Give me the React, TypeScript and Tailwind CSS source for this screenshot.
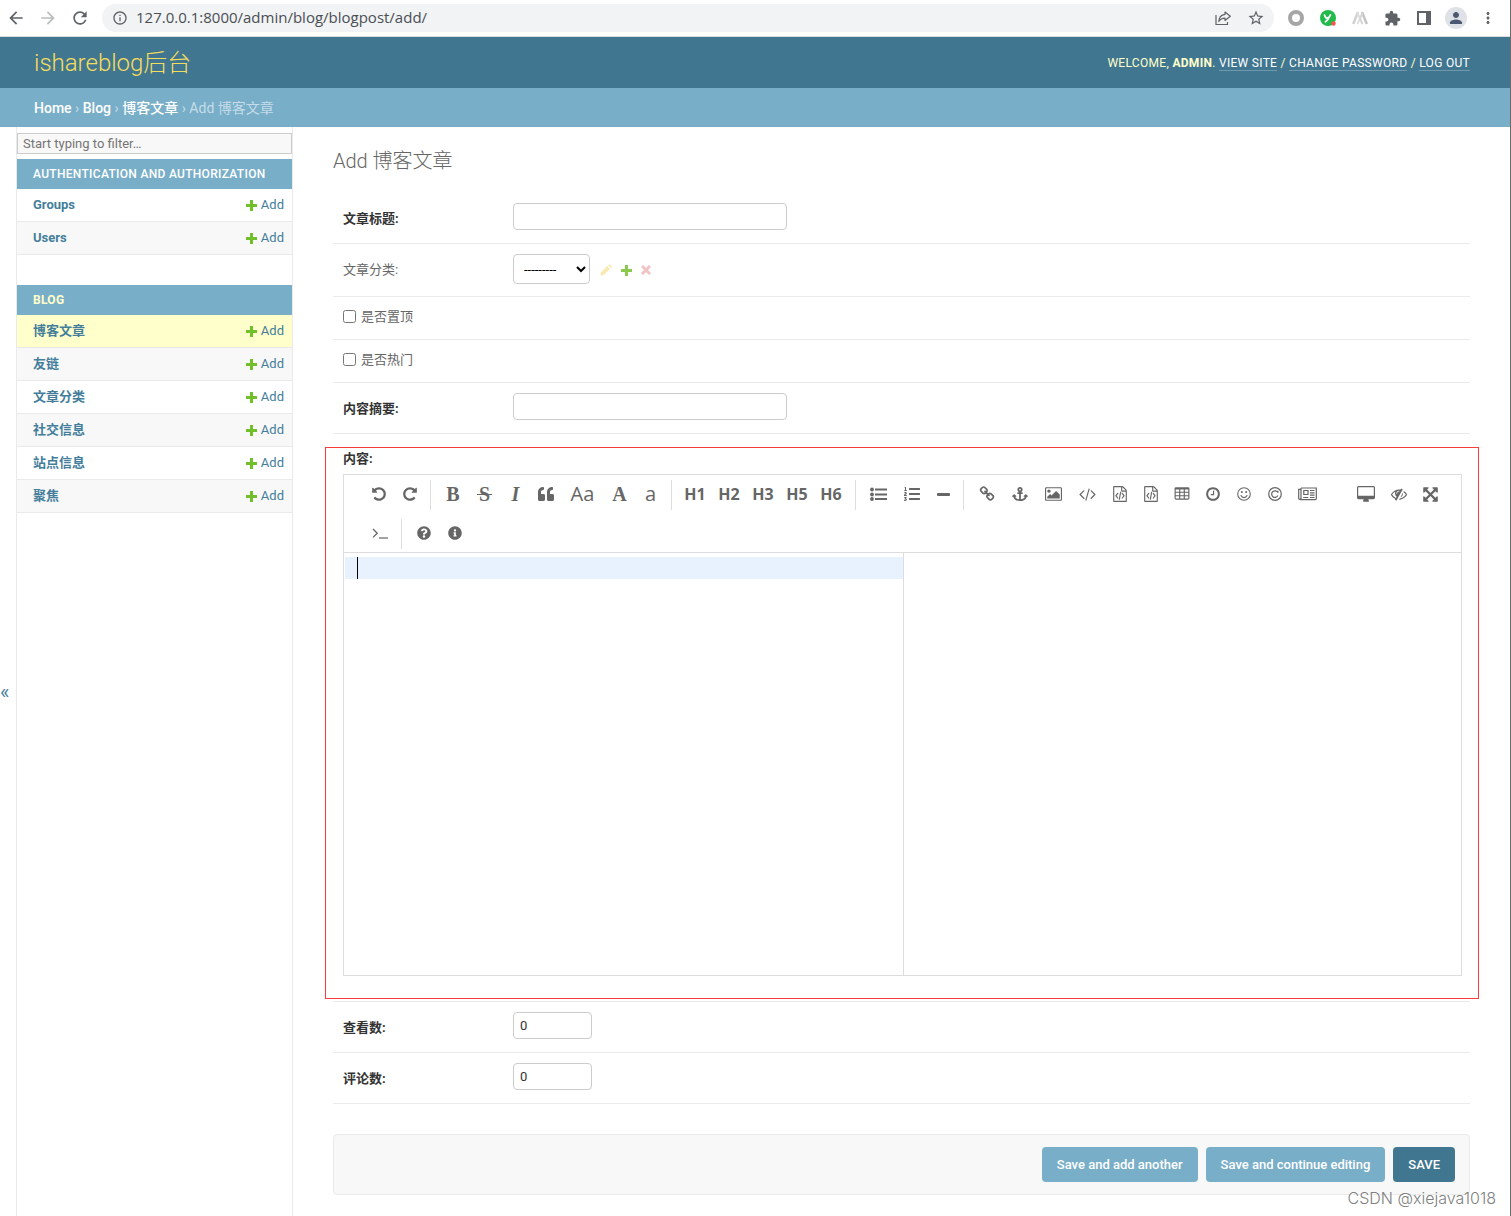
import type { ReactNode } from "react";
import {
  MdArrowBack,
  MdArrowForward,
  MdExtension,
  MdInfoOutline,
  MdMoreVert,
  MdPerson,
  MdRefresh,
  MdStarBorder,
} from "react-icons/md";
import { FaAnchor, FaInfoCircle, FaListOl, FaQuestionCircle, FaQuoteLeft } from "react-icons/fa";

/* ---------- icons ---------- */

function Glyph({ d, w = 1792, className = "h-4 w-4" }: { d: string; w?: number; className?: string }) {
  return (
    <svg viewBox={`0 0 ${w} 1792`} className={className} fill="currentColor" fillRule="evenodd" aria-hidden="true">
      <path d={d} />
    </svg>
  );
}

const UNDO =
  "M1664 896q0 156-61 298t-164 245-245 164-298 61q-172 0-327-72.5t-264-204.5q-7-10-6.5-22.5t8.5-20.5l137-138q10-9 25-9 16 2 23 12 73 95 179 147t225 52q104 0 198.5-40.5t163.5-109.5 109.5-163.5 40.5-198.5-40.5-198.5-109.5-163.5-163.5-109.5-198.5-40.5q-98 0-188 35.5t-160 101.5l137 138q31 30 14 69-17 40-59 40h-448q-26 0-45-19t-19-45v-448q0-42 40-59 39-17 69 14l130 129q107-101 244.5-156.5t284.5-55.5q156 0 298 61t245 164 164 245 61 298z";
const REDO =
  "M1664 256v448q0 26-19 45t-45 19h-448q-42 0-59-40-17-39 14-69l138-138q-148-137-349-137-104 0-198.5 40.5t-163.5 109.5-109.5 163.5-40.5 198.5 40.5 198.5 109.5 163.5 163.5 109.5 198.5 40.5q119 0 225-52t179-147q7-10 23-12 15 0 25 9l137 138q9 8 9.5 20.5t-7.5 22.5q-109 132-264 204.5t-327 72.5q-156 0-298-61t-245-164-164-245-61-298 61-298 164-245 245-164 298-61q147 0 284.5 55.5t244.5 156.5l130-129q29-31 70-14 39 17 39 59z";
const LINK =
  "M1520 1216q0-40-28-68l-208-208q-28-28-68-28-42 0-72 32 3 3 19 18.5t21.5 21.5 15 19 13 25.5 3.5 27.5q0 40-28 68t-68 28q-15 0-27.5-3.5t-25.5-13-19-15-21.5-21.5-18.5-19q-33 31-33 73 0 40 28 68l206 207q27 27 68 27 40 0 68-26l147-146q28-28 28-67zm-703-705q0-40-28-68l-206-207q-28-28-68-28-39 0-68 27l-147 146q-28 28-28 67 0 40 28 68l208 208q27 27 68 27 42 0 72-31-3-3-19-18.5t-21.5-21.5-15-19-13-25.5-3.5-27.5q0-40 28-68t68-28q15 0 27.5 3.5t25.5 13 19 15 21.5 21.5 18.5 19q33-31 33-73zm895 705q0 120-85 203l-147 146q-83 83-203 83-121 0-204-85l-206-207q-83-83-83-203 0-123 88-209l-88-88q-86 88-208 88-120 0-204-84l-208-208q-84-84-84-204t85-203l147-146q83-83 203-83 121 0 204 85l206 207q83 83 83 203 0 123-88 209l88 88q86-88 208-88 120 0 204 84l208 208q84 84 84 204z";
const PICTURE =
  "M640 576q0 80-56 136t-136 56-136-56-56-136 56-136 136-56 136 56 56 136zm1024 384v448h-1408v-192l320-320 160 160 512-512zm96-704h-1600q-13 0-22.500 9.500t-9.500 22.500v1216q0 13 9.500 22.500t22.500 9.500h1600q13 0 22.500-9.500t9.500-22.500v-1216q0-13-9.500-22.500t-22.500-9.500zm160 32v1216q0 66-47 113t-113 47h-1600q-66 0-113-47t-47-113v-1216q0-66 47-113t113-47h1600q66 0 113 47t47 113z";
const CODE =
  "M617 1399l-50 50q-10 10-23 10t-23-10l-466-466q-10-10-10-23t10-23l466-466q10-10 23-10t23 10l50 50q10 10 10 23t-10 23l-393 393 393 393q10 10 10 23t-10 23zm591-1067l-373 1291q-4 13-15.500 19.500t-23.500 2.500l-62-17q-13-4-19.500-15.500t-2.500-24.500l373-1291q4-13 15.500-19.500t23.500-2.500l62 17q13 4 19.500 15.500t2.500 24.500zm657 651l-466 466q-10 10-23 10t-23-10l-50-50q-10-10-10-23t10-23l393-393-393-393q-10-10-10-23t10-23l50-50q10-10 23-10t23 10l466 466q10 10 10 23t-10 23z";
const FILE_CODE =
  "M1596 380q28 28 48 76t20 88v1152q0 40-28 68t-68 28h-1344q-40 0-68-28t-28-68v-1600q0-40 28-68t68-28h896q40 0 88 20t76 48zm-444-244v376h376q-10-29-22-41l-313-313q-12-12-41-22zm384 1528v-1024h-416q-40 0-68-28t-28-68v-416h-768v1536h1280zm-928-896q8-11 21-12.500t24 6.500l51 38q11 8 12.500 21t-6.500 24l-182 243 182 243q8 11 6.500 24t-12.500 21l-51 38q-11 8-24 6.500t-21-12.500l-226-301q-14-19 0-38zm802 301q14 19 0 38l-226 301q-8 11-21 12.500t-24-6.500l-51-38q-11-8-12.500-21t6.500-24l182-243-182-243q-8-11-6.500-24t12.500-21l51-38q11-8 24-6.500t21 12.500zm-620 461q-13-2-20.500-13t-5.500-24l138-831q2-13 13-20.500t24-5.500l63 10q13 2 20.500 13t5.500 24l-138 831q-2 13-13 20.500t-24 5.500z";
const TABLE =
  "M224 128h1344q66 0 113 47t47 113v1088q0 66-47 113t-113 47h-1344q-66 0-113-47t-47-113v-1088q0-66 47-113t113-47zM192 384v256h384v-256zM704 384v256h384v-256zM1216 384v256h384v-256zM192 768v256h384v-256zM704 768v256h384v-256zM1216 768v256h384v-256zM192 1152v256h384v-256zM704 1152v256h384v-256zM1216 1152v256h384v-256z";
const CLOCK =
  "M1024 544v448q0 14-9 23t-23 9h-320q-14 0-23-9t-9-23v-64q0-14 9-23t23-9h224v-352q0-14 9-23t23-9h64q14 0 23 9t9 23zm416 352q0-148-73-273t-198-198-273-73-273 73-198 198-73 273 73 273 198 198 273 73 273-73 198-198 73-273zm224 0q0 209-103 385.500t-279.500 279.500-385.500 103-385.500-103-279.500-279.500-103-385.500 103-385.500 279.500-279.500 385.500-103 385.500 103 279.500 279.500 103 385.500z";
const DESKTOP =
  "M1792 992v-832q0-13-9.500-22.500t-22.500-9.500h-1600q-13 0-22.500 9.500t-9.500 22.500v832q0 13 9.500 22.500t22.500 9.500h1600q13 0 22.500-9.500t9.500-22.500zm128-832v1088q0 66-47 113t-113 47h-544q0 37 16 77.500t32 71 16 43.500q0 26-19 45t-45 19h-512q-26 0-45-19t-19-45q0-14 16-44t32-70 16-78h-544q-66 0-113-47t-47-113v-1088q0-66 47-113t113-47h1600q66 0 113 47t47 113z";
const EYE_SLASH =
  "M555 1335l78-141q-87-63-136-159t-49-203q0-121 61-225-229 117-381 353 167 258 427 375zm389-759q0-20-14-34t-34-14q-125 0-214.500 89.500t-89.500 214.500q0 20 14 34t34 14 34-14 14-34q0-86 61-147t147-61q20 0 34-14t14-34zm363-191q0 7-1 9-106 189-316 567t-315 566l-49 89q-10 16-28 16-12 0-134-70-16-10-16-28 0-12 44-87-143-65-263.500-173t-208.500-245q-20-31-20-69t20-69q153-235 380-371t496-136q89 0 180 17l54-97q10-16 28-16 5 0 18 6t31 15.500 33 18.500 31.500 18.500 19.500 11.500q16 10 16 27zm37 447q0 139-79 253.500t-209 164.500l280-502q8 45 8 84zm448 128q0 35-20 69-39 64-109 145-150 172-347.500 267t-419.500 95l74-132q212-18 392.500-137t301.500-307q-115-179-282-294l63-112q95 64 182.500 153t144.500 184q20 34 20 69z";
const EXPAND =
  "M1411 541l-355 355 355 355 144-144q29-31 70-14 39 17 39 59v448q0 26-19 45t-45 19h-448q-42 0-59-40-17-39 14-69l144-144-355-355-355 355 144 144q31 30 14 69-17 40-59 40h-448q-26 0-45-19t-19-45v-448q0-42 40-59 39-17 69 14l144 144 355-355-355-355-144 144q-19 19-45 19-12 0-24-5-40-17-40-59v-448q0-26 19-45t45-19h448q42 0 59 40 17 39-14 69l-144 144 355 355 355-355-144-144q-31-30-14-69 17-40 59-40h448q26 0 45 19t19 45v448q0 42-39 59-13 5-25 5-26 0-45-19z";

function ListIcon() {
  return (
    <svg viewBox="0 0 17 14" className="h-3.5 w-[17px]" fill="currentColor" aria-hidden="true">
      <circle cx="2" cy="2.500" r="1.900" />
      <circle cx="2" cy="7.500" r="1.900" />
      <circle cx="2" cy="12" r="1.900" />
      <path d="M5 1.500h12v2H5zM5 6.500h12v2H5zM5 11h12v2H5z" />
    </svg>
  );
}

function SmileIcon() {
  return (
    <svg viewBox="0 0 14 14" className="h-3.5 w-3.5" fill="none" stroke="currentColor" strokeWidth="1.100" aria-hidden="true">
      <circle cx="7" cy="7" r="6.300" />
      <path d="M4 8.500c.5 1.300 1.600 2.100 3 2.100s2.500-.8 3-2.100" strokeLinecap="round" />
      <circle cx="4.800" cy="5" r="1" fill="currentColor" stroke="none" />
      <circle cx="9.200" cy="5" r="1" fill="currentColor" stroke="none" />
    </svg>
  );
}

function CopyrightIcon() {
  return (
    <svg viewBox="0 0 14 14" className="h-3.5 w-3.5" fill="none" stroke="currentColor" strokeWidth="1.200" aria-hidden="true">
      <circle cx="7" cy="7" r="6.300" />
      <path d="M9.900 5.600A3.300 3.300 0 1 0 9.900 8.600M9.900 3.800v2" />
    </svg>
  );
}

function NewsIcon() {
  return (
    <svg viewBox="0 0 19 14" className="h-3.5 w-[19px]" fill="none" stroke="currentColor" strokeWidth="1.200" aria-hidden="true">
      <path d="M3 1h15.300v10.500a1.200 1.200 0 0 1-1.200 1.200H2M3 1v10.500a1.200 1.200 0 0 1-2.300 0V2.300H3" />
      <path d="M5.800 3.500h4.200v4H5.800zM5.300 10.500h5M12 3.500h4.500M12 5.800h4.500M12 8.200h4.500M12 10.500h4.500" />
    </svg>
  );
}

function TerminalIcon() {
  return (
    <svg viewBox="0 0 16 12" className="h-3 w-4" fill="none" stroke="currentColor" aria-hidden="true">
      <path d="M1 2l4.200 4.200L1 10.400" strokeWidth="1.300" />
      <path d="M7 11h9" strokeWidth="1.200" />
    </svg>
  );
}

function PlusIcon({ className = "text-[#70bf2b]" }: { className?: string }) {
  return (
    <svg viewBox="0 0 11 11" className={`h-[11px] w-[11px] ${className}`} fill="currentColor" aria-hidden="true">
      <path d="M4 0h3v4h4v3H7v4H4V7H0V4h4z" />
    </svg>
  );
}

function PencilIcon() {
  return (
    <svg viewBox="0 0 12 12" className="h-3 w-3" fill="#fbe9b4" aria-hidden="true">
      <path d="M1 8.200L7.200 2l2.800 2.800L3.800 11 .3 11.700zM8 1.200l.8-.8q.6-.5 1.200 0l1.600 1.600q.5.6 0 1.200l-.8.800z" />
    </svg>
  );
}

function CrossIcon() {
  return (
    <svg viewBox="0 0 10 10" className="h-2.5 w-2.5" stroke="#f3c4c5" strokeWidth="3" aria-hidden="true">
      <path d="M1 1l8 8M9 1L1 9" />
    </svg>
  );
}

/* ---------- browser bar ---------- */

function BrowserBar() {
  return (
    <div className="flex h-[37px] items-center border-b border-[#dadce0] bg-white pl-1.5 text-[#5f6368]">
      <button type="button" aria-label="Back" className="w-8">
        <MdArrowBack className="size-5" />
      </button>
      <button type="button" aria-label="Forward" className="w-8 text-[#babcbe]">
        <MdArrowForward className="size-5" />
      </button>
      <button type="button" aria-label="Reload" className="w-8">
        <MdRefresh className="size-5" />
      </button>
      <div className="flex h-7 flex-1 items-center rounded-full bg-[#f1f3f4] pl-2.5 pr-[9px]">
        <MdInfoOutline className="mr-2 size-4" />
        <input
          aria-label="Address"
          readOnly
          value="127.0.0.1:8000/admin/blog/blogpost/add/"
          className="min-w-0 flex-1 bg-transparent pb-0.5 font-['Open_Sans',sans-serif] text-[15px] leading-5 text-[#4b4f54] outline-none"
        />
        <button type="button" aria-label="Share" className="w-8">
          <svg viewBox="0 0 16 16" className="size-4" fill="none" stroke="currentColor" strokeWidth="1.200">
            <path d="M1 5v9.500h11.500V12" />
            <path d="M10 2l5.300 4.300L10 10.500V8.200c-3 0-4.800 1-6.200 3.300.2-4.300 2.500-6.800 6.200-7.200z" strokeLinejoin="round" />
          </svg>
        </button>
        <button type="button" aria-label="Bookmark">
          <MdStarBorder className="size-[18px]" />
        </button>
      </div>
      <div className="flex items-center px-1.5">
        <button type="button" aria-label="Extension" className="flex w-8 justify-center">
          <svg viewBox="0 0 16 16" className="size-4">
            <circle cx="8" cy="8" r="6" fill="none" stroke="#a6a6a6" strokeWidth="4" />
          </svg>
        </button>
        <button type="button" aria-label="Extension" className="flex w-8 justify-center">
          <svg viewBox="0 0 16 16" className="size-4">
            <circle cx="8" cy="8" r="8" fill="#22ba4b" />
            <path d="M4.500 5l1 2.300q.6 1 2 .7 2.200-.5 3-3.200M8.800 7.500q-.5 2.600-3.300 4.300" fill="none" stroke="#fff" strokeWidth="1.800" strokeLinecap="round" />
            <circle cx="13.500" cy="13.500" r="2.200" fill="#f4574d" />
          </svg>
        </button>
        <button type="button" aria-label="Extension" className="flex w-8 justify-center">
          <svg viewBox="0 0 16 14" className="h-3.5 w-4" fill="none" strokeWidth="2.500">
            <path d="M6 1L1.200 13" stroke="#d2d2d2" />
            <path d="M10 1l4.800 12" stroke="#c4c4c4" />
            <path d="M5.500 2L8 7.500 5.500 13" stroke="#e0e0e0" strokeWidth="2" />
            <path d="M10.500 2L8 7.500l2.500 5.500" stroke="#d6d6d6" strokeWidth="2" />
          </svg>
        </button>
        <button type="button" aria-label="Extensions" className="flex w-8 justify-center">
          <MdExtension className="size-[17px]" />
        </button>
        <button type="button" aria-label="Side panel" className="flex w-8 justify-center">
          <svg viewBox="0 0 14 14" className="size-3.5" fill="currentColor" fillRule="evenodd">
            <path d="M0 0h14v14H0zM2 2v10h7V2z" />
          </svg>
        </button>
        <button type="button" aria-label="Profile" className="flex w-8 justify-center">
          <span className="flex size-[22px] items-center justify-center rounded-full bg-[#dee1e6] text-[#4a5872]">
            <MdPerson className="size-[18px]" />
          </span>
        </button>
        <button type="button" aria-label="Menu" className="flex w-8 justify-center">
          <MdMoreVert className="size-[18px]" />
        </button>
      </div>
    </div>
  );
}

/* ---------- sidebar ---------- */

function AppModule({ title, items, current = false }: { title: string; items: string[]; current?: boolean }) {
  return (
    <table className="mb-[30px] w-full border-separate border-spacing-0 text-[13px] leading-4">
      <caption
        className={`h-[30px] bg-[#79aec8] px-4 text-left text-xs leading-[30px] tracking-wide ${
          current ? "font-bold text-[#ffffcc]" : "font-medium text-white"
        }`}
      >
        <a href="#app">{title}</a>
      </caption>
      <tbody>
        {items.map((name, i) => (
          <tr
            key={name}
            className={`h-[33px] ${current && i === 0 ? "bg-[#ffffcc]" : i % 2 ? "bg-[#f8f8f8]" : "bg-white"}`}
          >
            <th scope="row" className="border-b border-[#eaeaea] pl-4 text-left font-bold text-[#447e9b]">
              <a href="#model">{name}</a>
            </th>
            <td className="border-b border-[#eaeaea] pr-2 text-[#447e9b]">
              <a href="#add" className="flex items-center justify-end gap-1">
                <PlusIcon />
                Add
              </a>
            </td>
          </tr>
        ))}
      </tbody>
    </table>
  );
}

/* ---------- form ---------- */

function Row({ children }: { children: ReactNode }) {
  return <div className="flex items-start border-b border-[#eaeaea] p-2.5">{children}</div>;
}

function Label({ id, text, bold = true }: { id: string; text: string; bold?: boolean }) {
  return (
    <label
      htmlFor={id}
      className={`w-[170px] shrink-0 pt-[7px] text-[13px] leading-[18px] ${bold ? "font-bold text-[#333]" : "text-[#666]"}`}
    >
      {text}
    </label>
  );
}

function TextRow({ id, label, value, narrow = false }: { id: string; label: string; value?: string; narrow?: boolean }) {
  return (
    <Row>
      <Label id={id} text={label} />
      <input
        id={id}
        defaultValue={value}
        className={`mb-[3px] h-[27px] rounded border border-[#ccc] px-1.5 text-[13px] text-[#333] ${
          narrow ? "w-[79px]" : "w-[274px]"
        }`}
      />
    </Row>
  );
}

function CheckRow({ id, label }: { id: string; label: string }) {
  return (
    <Row>
      <div className="flex h-[22px] items-start">
        <input id={id} type="checkbox" className="mt-[3px] size-[13px]" />
        <label htmlFor={id} className="ml-[5px] text-[13px] leading-5 text-[#666]">
          {label}
        </label>
      </div>
    </Row>
  );
}

function Tool({ name, width = "w-[31px]", children }: { name: string; width?: string; children: ReactNode }) {
  return (
    <button
      type="button"
      title={name}
      aria-label={name}
      className={`flex h-[30px] shrink-0 items-center justify-center pb-0.5 ${width}`}
    >
      {children}
    </button>
  );
}

function Separator() {
  return <span className="mr-1.5 ml-[5px] h-[30px] w-px shrink-0 bg-[#ddd]" />;
}

const SERIF = "font-['Liberation_Serif',serif] text-xl leading-none";

function Editor() {
  return (
    <div className="-mr-0.5 border border-[#ddd] bg-white text-[#666]">
      <div className="flex flex-col gap-[9px] border-b border-[#ddd] pt-[5px] pr-4 pb-[3px] pl-[19px]">
        <div className="flex">
          <Tool name="Undo"><Glyph d={UNDO} /></Tool>
          <Tool name="Redo"><Glyph d={REDO} /></Tool>
          <Separator />
          <Tool name="Bold" width="w-8"><span className={`${SERIF} font-bold`}>B</span></Tool>
          <Tool name="Strikethrough">
            <span
              className={`${SERIF} relative font-bold after:absolute after:-inset-x-0.5 after:top-1/2 after:h-px after:bg-[#666]`}
            >
              S
            </span>
          </Tool>
          <Tool name="Italic"><span className={`${SERIF} font-bold italic`}>I</span></Tool>
          <Tool name="Quote" width="w-[30px]"><FaQuoteLeft className="size-4" /></Tool>
          <Tool name="Capitalize words" width="w-[43px]">
            <span className="font-['Open_Sans',sans-serif] text-xl leading-none">Aa</span>
          </Tool>
          <Tool name="Uppercase"><span className={`${SERIF} font-bold`}>A</span></Tool>
          <Tool name="Lowercase"><span className="font-['Open_Sans',sans-serif] text-xl leading-none">a</span></Tool>
          <Separator />
          <div className="flex pr-0.5 font-['Open_Sans',sans-serif] text-base font-bold">
            {["H1", "H2", "H3", "H5", "H6"].map((h) => (
              <Tool key={h} name={h} width="w-[34px]">{h}</Tool>
            ))}
          </div>
          <Separator />
          <Tool name="Bulleted list" width="w-[33px]"><ListIcon /></Tool>
          <Tool name="Numbered list" width="w-[33px]"><FaListOl className="size-4" /></Tool>
          <Tool name="Horizontal rule" width="w-[30px]"><span className="h-[3px] w-[13px] rounded-[1px] bg-[#666]" /></Tool>
          <Separator />
          <Tool name="Link" width="w-[33px]"><Glyph d={LINK} /></Tool>
          <Tool name="Anchor" width="w-[33px]"><FaAnchor className="size-4" /></Tool>
          <Tool name="Image" width="w-[35px]"><Glyph d={PICTURE} w={1920} className="h-4 w-[17px]" /></Tool>
          <Tool name="Inline code" width="w-[33px]"><Glyph d={CODE} w={1920} className="h-4 w-[17px]" /></Tool>
          <Tool name="Preformatted text"><Glyph d={FILE_CODE} /></Tool>
          <Tool name="Code block"><Glyph d={FILE_CODE} /></Tool>
          <Tool name="Table"><Glyph d={TABLE} /></Tool>
          <Tool name="Date and time"><Glyph d={CLOCK} /></Tool>
          <Tool name="Emoji"><SmileIcon /></Tool>
          <Tool name="HTML entities"><CopyrightIcon /></Tool>
          <Tool name="Page break" width="w-[35px]"><NewsIcon /></Tool>
          <div className="ml-auto flex">
            <Tool name="Unwatch" width="w-[34px]"><Glyph d={DESKTOP} w={1920} className="h-[17px] w-[18px]" /></Tool>
            <Tool name="Preview" width="w-8"><Glyph d={EYE_SLASH} /></Tool>
            <Tool name="Fullscreen" width="w-[30px]"><Glyph d={EXPAND} className="h-[17px] w-[17px]" /></Tool>
          </div>
        </div>
        <div className="flex">
          <Tool name="Go to line" width="w-[33px]"><TerminalIcon /></Tool>
          <Separator />
          <Tool name="Help"><FaQuestionCircle className="size-3.5" /></Tool>
          <Tool name="Info"><FaInfoCircle className="size-3.5" /></Tool>
        </div>
      </div>
      <div className="grid h-[422px] grid-cols-2">
        <div className="pt-1 pl-px">
          <div className="flex h-[22px] bg-[#e8f2ff] pl-3">
            <span className="w-px bg-black" />
          </div>
        </div>
        <div className="border-l border-[#ddd]" />
      </div>
    </div>
  );
}

export default function App() {
  return (
    <div className="relative flex min-h-screen flex-col border-r border-[#6b6b6b] bg-white font-[Roboto,'Noto_Sans_CJK_SC',sans-serif] text-[13px] text-[#333]">
      <BrowserBar />

      <header className="flex h-[51px] items-center justify-between bg-[#417690] pr-10 pl-[34px] text-[#ffffcc]">
        <h1 className="text-2xl leading-8 font-light text-[#f5dd5d]">
          <a href="#home">ishareblog后台</a>
        </h1>
        <div className="text-xs leading-4 tracking-wide">
          WELCOME, <strong className="font-bold">ADMIN</strong>.{" "}
          <a href="#site" className="border-b border-white/25 text-white">VIEW SITE</a> /{" "}
          <a href="#password" className="border-b border-white/25 text-white">CHANGE PASSWORD</a> /{" "}
          <a href="#logout" className="border-b border-white/25 text-white">LOG OUT</a>
        </div>
      </header>

      <nav className="flex h-[39px] items-center bg-[#79aec8] pl-[34px] text-sm leading-5 text-[#c4dce8]">
        <div>
          <a href="#home" className="font-medium text-white">Home</a> ›{" "}
          <a href="#blog" className="font-medium text-white">Blog</a> ›{" "}
          <a href="#posts" className="font-medium text-white">博客文章</a> › Add 博客文章
        </div>
      </nav>

      <div className="flex flex-1">
        <button type="button" aria-label="Toggle navigation" className="flex w-4 items-center pt-10 text-xl leading-none text-[#447e9b]">
          «
        </button>
        <aside className="w-[277px] shrink-0 border-x border-[#eaeaea] pt-1.5">
          <input
            type="search"
            aria-label="Filter navigation items"
            placeholder="Start typing to filter…"
            className="mb-[5px] block h-[21px] w-full border border-[#ccc] bg-[#f8f8f8] px-[5px] text-[13px] placeholder:text-[#757575]"
          />
          <AppModule title="AUTHENTICATION AND AUTHORIZATION" items={["Groups", "Users"]} />
          <AppModule current title="BLOG" items={["博客文章", "友链", "文章分类", "社交信息", "站点信息", "聚焦"]} />
        </aside>

        <main className="min-w-0 flex-1 px-10 pt-[21px] pb-[21px]">
          <h2 className="mb-[19px] text-xl leading-[26px] font-light text-[#666]">Add 博客文章</h2>
          <form onSubmit={(e) => e.preventDefault()}>
            <TextRow id="title" label="文章标题:" />
            <Row>
              <Label id="category" text="文章分类:" bold={false} />
              <div className="mb-0.5 flex h-[30px] items-center">
                <select id="category" className="mr-2.5 h-[30px] w-[77px] rounded border border-[#ccc] bg-white px-1.5 text-[13px] text-black">
                  <option>---------</option>
                </select>
                <div className="flex items-center gap-[9px] pt-0.5">
                  <button type="button" aria-label="Change category"><PencilIcon /></button>
                  <a href="#add-category" aria-label="Add category"><PlusIcon className="text-[#8cc94f]" /></a>
                  <button type="button" aria-label="Delete category"><CrossIcon /></button>
                </div>
              </div>
            </Row>
            <CheckRow id="top" label="是否置顶" />
            <CheckRow id="hot" label="是否热门" />
            <TextRow id="summary" label="内容摘要:" />
            <div className="relative border-b border-[#eaeaea] px-2.5 pt-4 pb-[25px]">
              <div className="pointer-events-none absolute -right-[9px] -left-2 top-[13px] bottom-0.5 border border-[#f83b3b]" />
              <h3 className="mb-1.5 text-[13px] leading-[18px] font-bold text-[#333]">内容:</h3>
              <Editor />
            </div>
            <TextRow id="views" label="查看数:" value="0" narrow />
            <TextRow id="comments" label="评论数:" value="0" narrow />
            <div className="mt-[30px] flex justify-end gap-2 rounded border border-[#eaeaea] bg-[#f8f8f8] px-3.5 py-3 text-[13px] font-medium text-white">
              <button type="submit" className="h-[35px] rounded bg-[#79aec8] px-[15px]">Save and add another</button>
              <button type="submit" className="h-[35px] rounded bg-[#79aec8] px-[15px]">Save and continue editing</button>
              <button type="submit" className="h-[35px] rounded bg-[#417690] px-[15px]">SAVE</button>
            </div>
          </form>
        </main>
      </div>

      <div className="pointer-events-none absolute right-3.5 bottom-2 font-[Inter,sans-serif] text-base leading-5 font-light text-[#808080] [text-shadow:1px_1px_0_#fff]">
        CSDN @xiejava1018
      </div>
    </div>
  );
}
